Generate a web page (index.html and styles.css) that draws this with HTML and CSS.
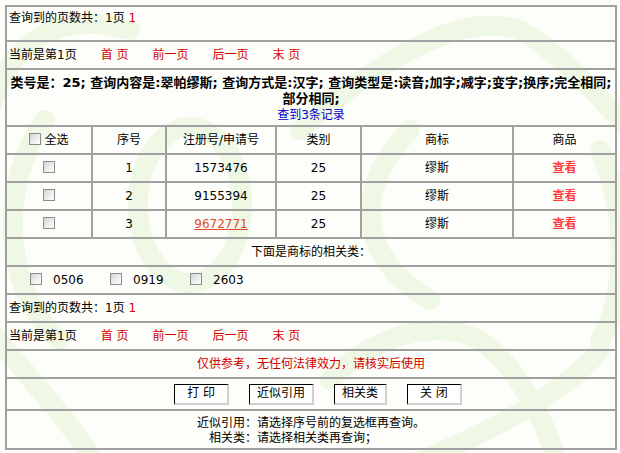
FILE: index.html
```html
<!DOCTYPE html>
<html lang="zh-CN">
<head>
<meta charset="utf-8">
<title>商标查询结果</title>
<link rel="stylesheet" href="styles.css">
</head>
<body>
<table class="grid">
  <colgroup>
    <col class="w1"><col class="w2"><col class="w3"><col class="w4"><col class="w5"><col class="w6">
  </colgroup>
  <tr><td colspan="6" class="info first">查询到的页数共：1页 <span class="num">1</span></td></tr>
  <tr><td colspan="6" class="nav">当前是第1页<a class="nl">首 页</a><a class="nl">前一页</a><a class="nl">后一页</a><a class="nl">末 页</a></td></tr>
  <tr><td colspan="6" class="summary"><div class="sum-text">类号是：25; 查询内容是:翠帕缪斯; 查询方式是:汉字; 查询类型是:读音;加字;减字;变字;换序;完全相同;<br>部分相同;</div><div class="count">查到3条记录</div></td></tr>
  <tr class="row">
    <td><span class="all"><input type="checkbox" class="cb">全选</span></td>
    <td>序号</td><td>注册号/申请号</td><td>类别</td><td>商标</td><td>商品</td>
  </tr>
  <tr class="row">
    <td><input type="checkbox" class="cb"></td>
    <td>1</td><td>1573476</td><td>25</td><td>缪斯</td><td><a class="view">查看</a></td>
  </tr>
  <tr class="row">
    <td><input type="checkbox" class="cb"></td>
    <td>2</td><td>9155394</td><td>25</td><td>缪斯</td><td><a class="view">查看</a></td>
  </tr>
  <tr class="row">
    <td><input type="checkbox" class="cb"></td>
    <td>3</td><td><a class="reg">9672771</a></td><td>25</td><td>缪斯</td><td><a class="view">查看</a></td>
  </tr>
  <tr class="row"><td colspan="6">下面是商标的相关类：</td></tr>
  <tr class="row"><td colspan="6" class="related">
    <label class="rel"><input type="checkbox" class="cb">0506</label><label class="rel"><input type="checkbox" class="cb">0919</label><label class="rel"><input type="checkbox" class="cb">2603</label>
  </td></tr>
  <tr class="row"><td colspan="6" class="info">查询到的页数共：1页 <span class="num">1</span></td></tr>
  <tr class="row"><td colspan="6" class="nav">当前是第1页<a class="nl">首 页</a><a class="nl">前一页</a><a class="nl">后一页</a><a class="nl">末 页</a></td></tr>
  <tr class="row"><td colspan="6" class="notice">仅供参考，无任何法律效力，请核实后使用</td></tr>
  <tr><td colspan="6" class="buttons">
    <button class="btn btn-wide">打 印</button><button class="btn">近似引用</button><button class="btn">相关类</button><button class="btn btn-wide">关 闭</button>
  </td></tr>
  <tr><td colspan="6" class="help">
    <div class="help-box"><div>近似引用：请选择序号前的复选框再查询。</div><div class="indent">相关类：请选择相关类再查询；</div></div>
  </td></tr>
</table>
</body>
</html>
```

FILE: styles.css
```css
html, body {
  margin: 0;
  padding: 0;
}

body {
  padding: 5px;
  font-family: "DejaVu Sans", "Noto Sans CJK SC", sans-serif;
  font-size: 12px;
  color: #000;
  background-color: #fdfef9;
  background-image: url("data:image/svg+xml,%3Csvg xmlns='http://www.w3.org/2000/svg' width='620' height='453'%3E%3Cg fill='none' stroke='%23eef8e5' stroke-width='20' stroke-linecap='round'%3E%3Cpath d='M-10 110 C10 40 60 10 130 30'/%3E%3Cpath d='M45 120 C0 180 0 290 60 340'/%3E%3Cellipse cx='190' cy='205' rx='52' ry='78'/%3E%3Cpath d='M300 130 C380 60 460 10 520 30 C570 60 600 100 630 130'/%3E%3Cpath d='M410 130 C350 190 360 260 430 300'/%3E%3Cpath d='M600 150 C630 220 625 300 600 340'/%3E%3Cpath d='M330 380 C380 330 440 320 480 340 C520 370 545 420 560 470'/%3E%3Cpath d='M-10 330 C30 380 70 420 100 470'/%3E%3Cpath d='M600 350 C560 400 470 440 400 470'/%3E%3C/g%3E%3C/svg%3E");
  background-repeat: no-repeat;
}

.grid {
  width: 610px;
  border-collapse: collapse;
  table-layout: fixed;
}

.w1 { width: 86px; }
.w2 { width: 74px; }
.w3 { width: 110px; }
.w4 { width: 85px; }
.w5 { width: 152px; }
.w6 { width: 103px; }

.grid td {
  border: 2px solid #a0a0a0;
  padding: 0;
  text-align: center;
  vertical-align: middle;
  line-height: 15px;
}

.grid .row td {
  height: 26px;
}

.grid td.info,
.grid td.nav {
  text-align: left;
  padding-left: 2px;
}

.grid td.nav {
  height: 26px;
}

.grid td.first {
  height: 29px;
  vertical-align: top;
  padding-top: 4px;
}

.num {
  color: #e00000;
}

.nl {
  color: #d00000;
  margin-left: 24px;
}

.grid td.summary {
  padding: 5px 2px 2px;
}

.sum-text {
  font-weight: bold;
  font-size: 13px;
  line-height: 16px;
  white-space: nowrap;
}

.count {
  color: #0000cc;
  line-height: 16px;
}

.cb {
  appearance: none;
  -webkit-appearance: none;
  box-sizing: border-box;
  width: 12px;
  height: 12px;
  margin: 0;
  border: 1px solid #8c8c8c;
  background: linear-gradient(135deg, #d4d4d4 0%, #f4f4f4 70%, #ffffff 100%);
  vertical-align: middle;
  position: relative;
  top: -1px;
}

.all .cb {
  margin-right: 3px;
}

.reg {
  color: #e0482a;
  text-decoration: underline;
}

.view {
  color: #ff3b3b;
  font-weight: bold;
}

.grid td.related {
  text-align: left;
  padding-left: 23px;
}

.rel {
  display: inline-block;
  width: 80px;
}

.rel .cb {
  margin-right: 11px;
}

.notice {
  color: #d00000;
}

.grid td.buttons {
  height: 30px;
  padding-left: 14px;
}

.btn {
  font-family: "DejaVu Sans", "Noto Sans CJK SC", sans-serif;
  font-size: 12px;
  height: 21px;
  padding: 0 7px;
  margin: 0 10px;
  background: #ffffff;
  color: #000;
  border-style: solid;
  border-width: 1px 2px 2px 1px;
  border-color: #000 #d0d0d0 #d0d0d0 #000;
  border-radius: 0;
  line-height: 17px;
  vertical-align: middle;
}

.btn-wide {
  padding: 0 12px;
}

.grid td.help {
  height: 34px;
  padding-top: 3px;
}

.help-box {
  display: inline-block;
  text-align: left;
  line-height: 15px;
}

.indent {
  padding-left: 12px;
}
```
